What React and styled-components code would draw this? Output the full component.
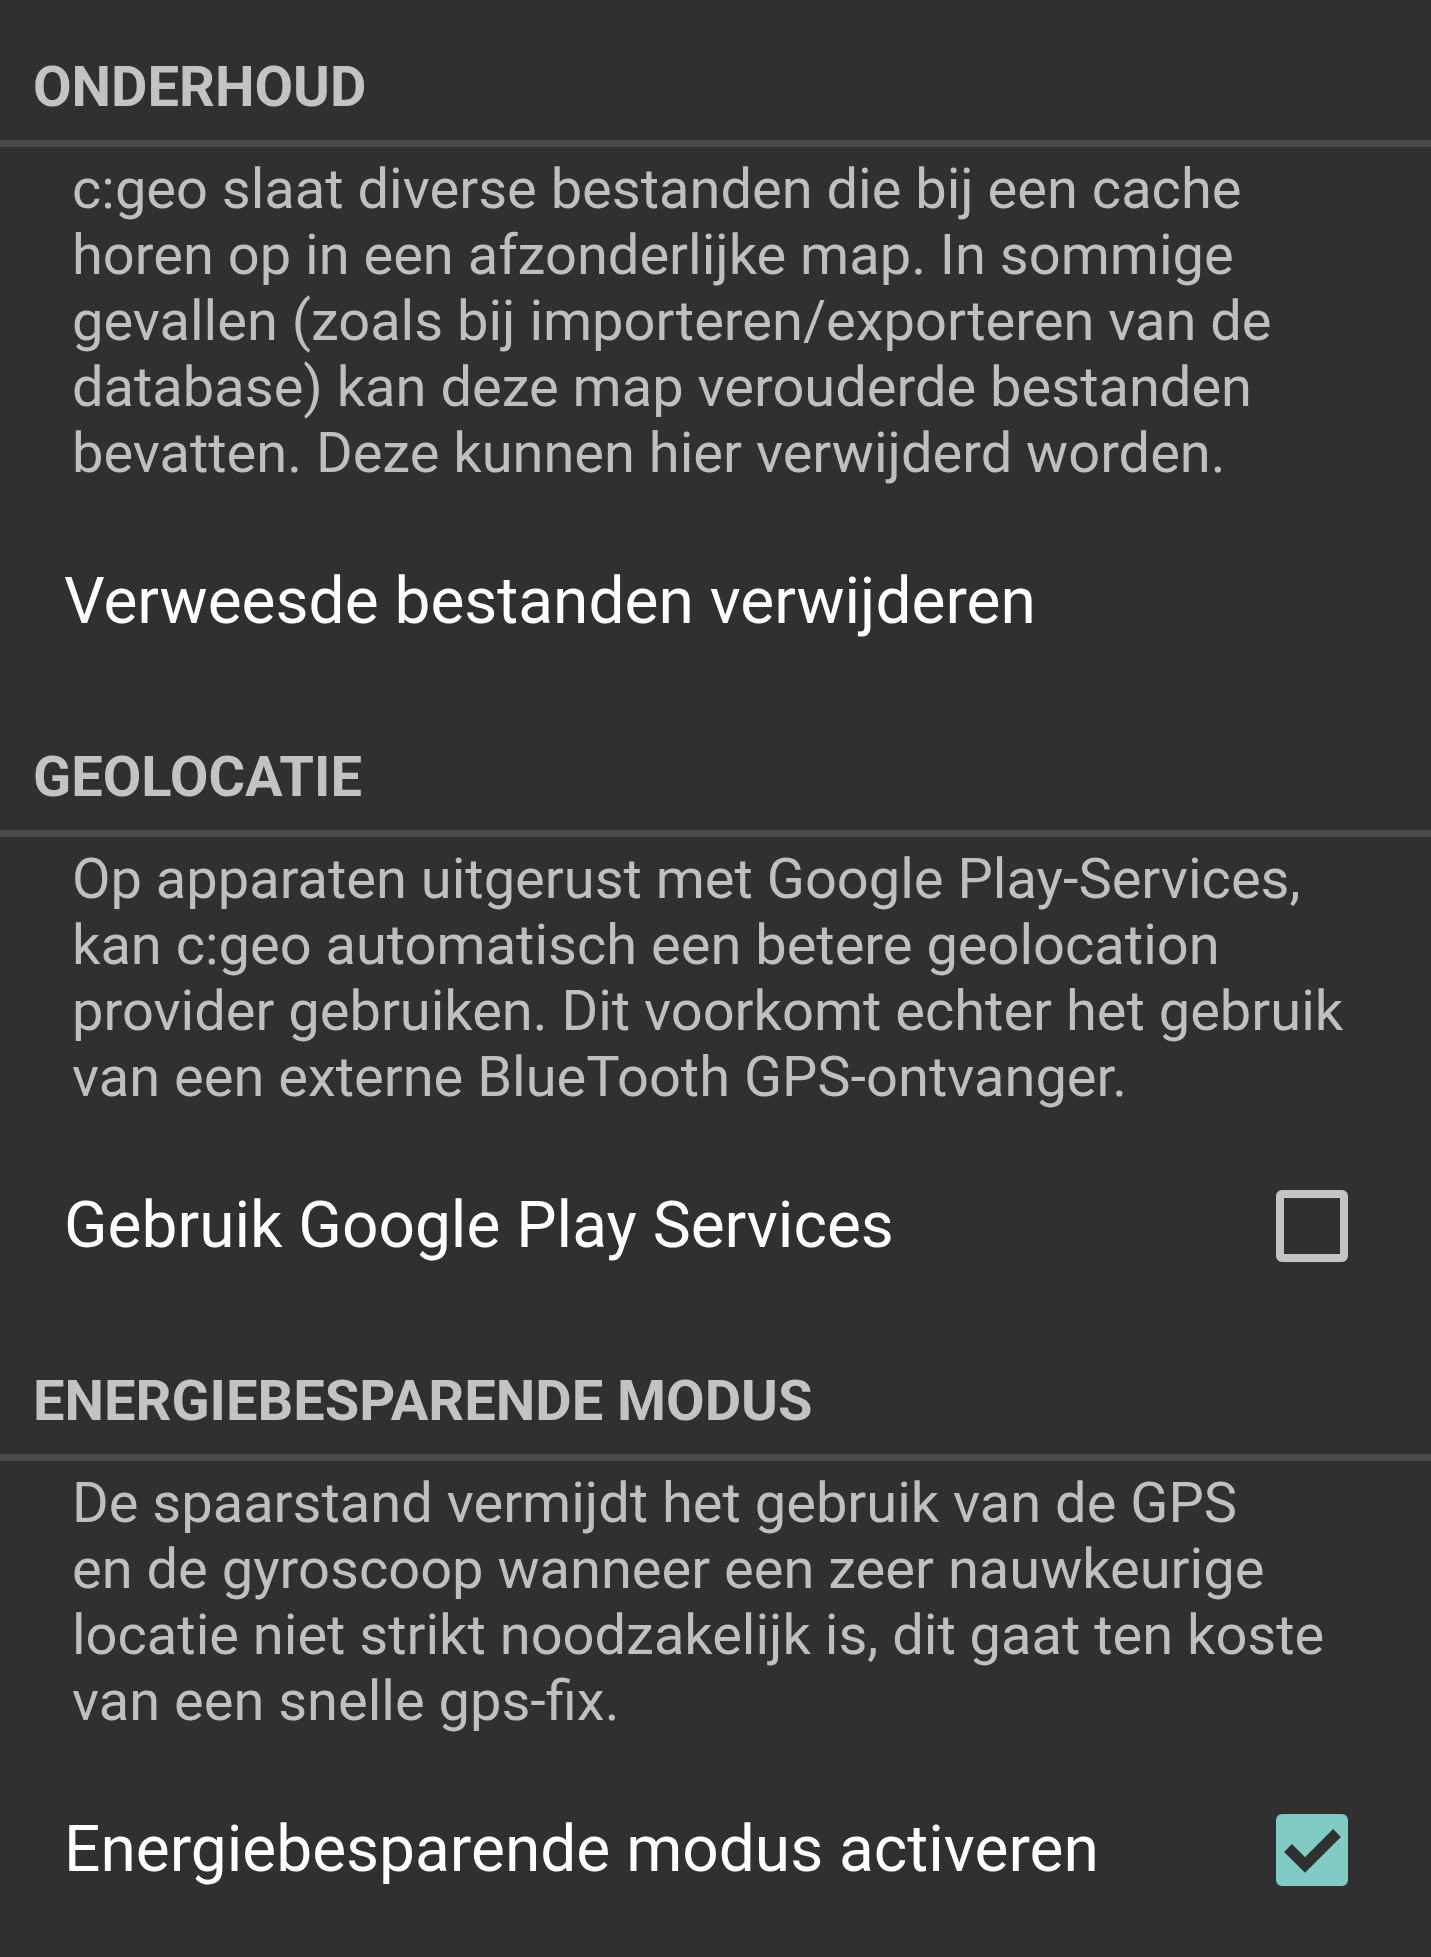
import React from 'react'
import styled, { createGlobalStyle } from 'styled-components'

const GlobalStyle = createGlobalStyle`
  html, body {
    margin: 0;
    padding: 0;
    background: #303030;
  }
  body {
    font-family: Roboto, "Noto Sans", sans-serif;
  }
`

const sections = [
  {
    title: 'ONDERHOUD',
    summary:
      'c:geo slaat diverse bestanden die bij een cache\nhoren op in een afzonderlijke map. In sommige\ngevallen (zoals bij importeren/exporteren van de\ndatabase) kan deze map verouderde bestanden\nbevatten. Deze kunnen hier verwijderd worden.',
    pref: 'Verweesde bestanden verwijderen',
    checkbox: null,
  },
  {
    title: 'GEOLOCATIE',
    summary:
      'Op apparaten uitgerust met Google Play-Services,\nkan c:geo automatisch een betere geolocation\nprovider gebruiken. Dit voorkomt echter het gebruik\nvan een externe BlueTooth GPS-ontvanger.',
    pref: 'Gebruik Google Play Services',
    checkbox: false,
  },
  {
    title: 'ENERGIEBESPARENDE MODUS',
    summary:
      'De spaarstand vermijdt het gebruik van de GPS\nen de gyroscoop wanneer een zeer nauwkeurige\nlocatie niet strikt noodzakelijk is, dit gaat ten koste\nvan een snelle gps-fix.',
    pref: 'Energiebesparende modus activeren',
    checkbox: true,
  },
]

const Screen = () => {
  return (
    <Page>
      <GlobalStyle />
      {sections.map((s) => (
        <Section key={s.title}>
          <CategoryTitle>{s.title}</CategoryTitle>
          <Divider />
          <Summary>{s.summary}</Summary>
          <PrefRow>
            <PrefTitle>{s.pref}</PrefTitle>
            {s.checkbox !== null && (
              <CheckBox checked={s.checkbox}>
                {s.checkbox && (
                  <svg width="72" height="72" viewBox="0 0 72 72">
                    <polyline
                      points="12,34 29,51 61,19"
                      fill="none"
                      stroke="#303030"
                      strokeWidth="11"
                      strokeLinecap="butt"
                      strokeLinejoin="miter"
                    />
                  </svg>
                )}
              </CheckBox>
            )}
          </PrefRow>
        </Section>
      ))}
    </Page>
  )
}

const Page = styled.div`
  min-height: 100vh;
  background: #303030;
  padding-top: 54px;
  box-sizing: border-box;
`

const Section = styled.section`
  display: flex;
  flex-direction: column;
`

const CategoryTitle = styled.h2`
  margin: 0;
  padding-left: 33px;
  font-size: 56px;
  line-height: 66px;
  font-weight: 700;
  color: #c3c3c3;
`

const Divider = styled.div`
  height: 7px;
  margin-top: 20px;
  background: #4a4a4a;
`

const Summary = styled.p`
  margin: 9px 0 0;
  padding-left: 72px;
  font-size: 56px;
  line-height: 66px;
  color: #bfbfbf;
  white-space: pre-line;
`

const PrefRow = styled.div`
  display: flex;
  align-items: center;
  justify-content: space-between;
  padding: 78px 83px 105px 64px;
`

const PrefTitle = styled.div`
  font-size: 64px;
  line-height: 75px;
  color: #ffffff;
`

const CheckBox = styled.div`
  width: 72px;
  height: 72px;
  box-sizing: border-box;
  border-radius: 6px;
  border: ${(p) => (p.checked ? 'none' : '8px solid #c4c4c4')};
  background: ${(p) => (p.checked ? '#80cbc4' : 'transparent')};
  display: flex;
  svg {
    display: block;
  }
`

export default Screen
